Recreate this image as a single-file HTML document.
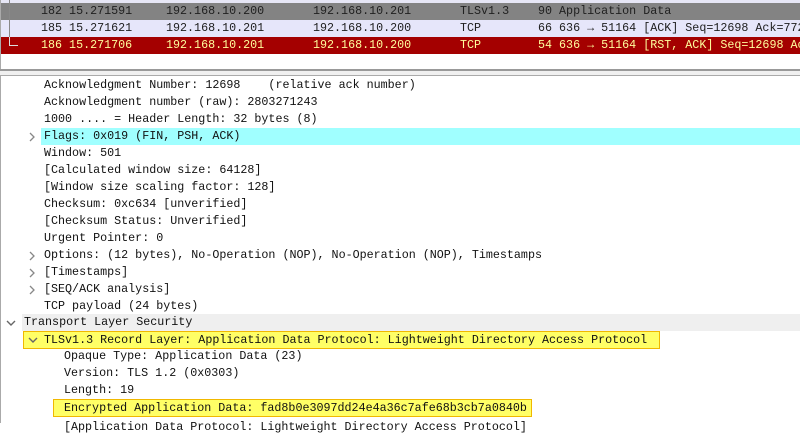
<!DOCTYPE html>
<html><head><style>
body{margin:0;width:800px;height:423px;overflow:hidden;background:#fff;font-family:"Liberation Mono",monospace;font-size:11.7px;position:relative;color:#111}
.r{position:absolute;left:0;right:0;height:17px;line-height:17px;white-space:pre}
.t{position:absolute;top:0}
svg.c{position:absolute}
</style></head><body>
<div style="position:absolute;left:0;top:0;width:800px;height:3px;background:#e6e6f5"></div>
<div class="r" style="top:3px;background:#838383;color:#202020"><span class="t" style="left:41px">182 15.271591</span><span class="t" style="left:166px">192.168.10.200</span><span class="t" style="left:313px">192.168.10.201</span><span class="t" style="left:460px">TLSv1.3</span><span class="t" style="left:538px">90 Application Data</span></div>
<div class="r" style="top:20px;background:#e6e6fa;color:#202020"><span class="t" style="left:41px">185 15.271621</span><span class="t" style="left:166px">192.168.10.201</span><span class="t" style="left:313px">192.168.10.200</span><span class="t" style="left:460px">TCP</span><span class="t" style="left:538px">66 636 → 51164 [ACK] Seq=12698 Ack=772</span></div>
<div class="r" style="top:37px;background:#a40000;color:#fffc9c"><span class="t" style="left:41px">186 15.271706</span><span class="t" style="left:166px">192.168.10.201</span><span class="t" style="left:313px">192.168.10.200</span><span class="t" style="left:460px">TCP</span><span class="t" style="left:538px">54 636 → 51164 [RST, ACK] Seq=12698 Ac</span></div>
<div style="position:absolute;left:9px;top:0;width:1px;height:37px;background:#888"></div>
<div style="position:absolute;left:9px;top:37px;width:1px;height:9px;background:#ddd"></div>
<div style="position:absolute;left:9px;top:45px;width:9px;height:1px;background:#ddd"></div>
<div style="position:absolute;left:0;top:0;width:1px;height:69px;background:#aaa"></div>
<div style="position:absolute;left:0;top:69px;width:800px;height:2px;background:#999"></div>
<div style="position:absolute;left:0;top:71px;width:800px;height:4px;background:#f0f0f0"></div>
<div style="position:absolute;left:0;top:75px;width:800px;height:1px;background:#aaa"></div>
<div style="position:absolute;left:0;top:75px;width:1px;height:348px;background:#aaa"></div>

<div class="r" style="top:77px"><span class="t" style="left:44px">Acknowledgment Number: 12698    (relative ack number)</span></div>
<div class="r" style="top:94px"><span class="t" style="left:44px">Acknowledgment number (raw): 2803271243</span></div>
<div class="r" style="top:111px"><span class="t" style="left:44px">1000 .... = Header Length: 32 bytes (8)</span></div>
<div class="r" style="top:128px;background:#a0ffff;left:41px"><span class="t" style="left:3px">Flags: 0x019 (FIN, PSH, ACK)</span></div>
<svg class="c" style="left:28px;top:132px" width="8" height="10"><path d="M2 1 L6 5 L2 9" fill="none" stroke="#888" stroke-width="1.3"/></svg>
<div class="r" style="top:145px"><span class="t" style="left:44px">Window: 501</span></div>
<div class="r" style="top:162px"><span class="t" style="left:44px">[Calculated window size: 64128]</span></div>
<div class="r" style="top:179px"><span class="t" style="left:44px">[Window size scaling factor: 128]</span></div>
<div class="r" style="top:196px"><span class="t" style="left:44px">Checksum: 0xc634 [unverified]</span></div>
<div class="r" style="top:213px"><span class="t" style="left:44px">[Checksum Status: Unverified]</span></div>
<div class="r" style="top:230px"><span class="t" style="left:44px">Urgent Pointer: 0</span></div>
<div class="r" style="top:247px"><span class="t" style="left:44px">Options: (12 bytes), No-Operation (NOP), No-Operation (NOP), Timestamps</span></div>
<svg class="c" style="left:28px;top:251px" width="8" height="10"><path d="M2 1 L6 5 L2 9" fill="none" stroke="#888" stroke-width="1.3"/></svg>
<div class="r" style="top:264px"><span class="t" style="left:44px">[Timestamps]</span></div>
<svg class="c" style="left:28px;top:268px" width="8" height="10"><path d="M2 1 L6 5 L2 9" fill="none" stroke="#888" stroke-width="1.3"/></svg>
<div class="r" style="top:281px"><span class="t" style="left:44px">[SEQ/ACK analysis]</span></div>
<svg class="c" style="left:28px;top:285px" width="8" height="10"><path d="M2 1 L6 5 L2 9" fill="none" stroke="#888" stroke-width="1.3"/></svg>
<div class="r" style="top:298px"><span class="t" style="left:44px">TCP payload (24 bytes)</span></div>
<div class="r" style="top:314px;left:22px;background:#efefef"><span class="t" style="left:2px">Transport Layer Security</span></div>
<svg class="c" style="left:6px;top:319px" width="10" height="8"><path d="M1 2 L5 6 L9 2" fill="none" stroke="#666" stroke-width="1.4"/></svg>
<div class="r" style="top:331px;left:23px;width:635px;height:16px;line-height:16px;background:#ffff66;border:1px solid #f0b800"><span class="t" style="left:20px">TLSv1.3 Record Layer: Application Data Protocol: Lightweight Directory Access Protocol</span></div>
<svg class="c" style="left:28px;top:336px" width="10" height="8"><path d="M1 2 L5 6 L9 2" fill="none" stroke="#666" stroke-width="1.4"/></svg>
<div class="r" style="top:348px"><span class="t" style="left:64px">Opaque Type: Application Data (23)</span></div>
<div class="r" style="top:365px"><span class="t" style="left:64px">Version: TLS 1.2 (0x0303)</span></div>
<div class="r" style="top:382px"><span class="t" style="left:64px">Length: 19</span></div>
<div class="r" style="top:399px;left:53px;width:477px;height:16px;line-height:16px;background:#ffff66;border:1px solid #f0b800"><span class="t" style="left:10px">Encrypted Application Data: fad8b0e3097dd24e4a36c7afe68b3cb7a0840b</span></div>
<div class="r" style="top:419px"><span class="t" style="left:64px">[Application Data Protocol: Lightweight Directory Access Protocol]</span></div>
</body></html>
